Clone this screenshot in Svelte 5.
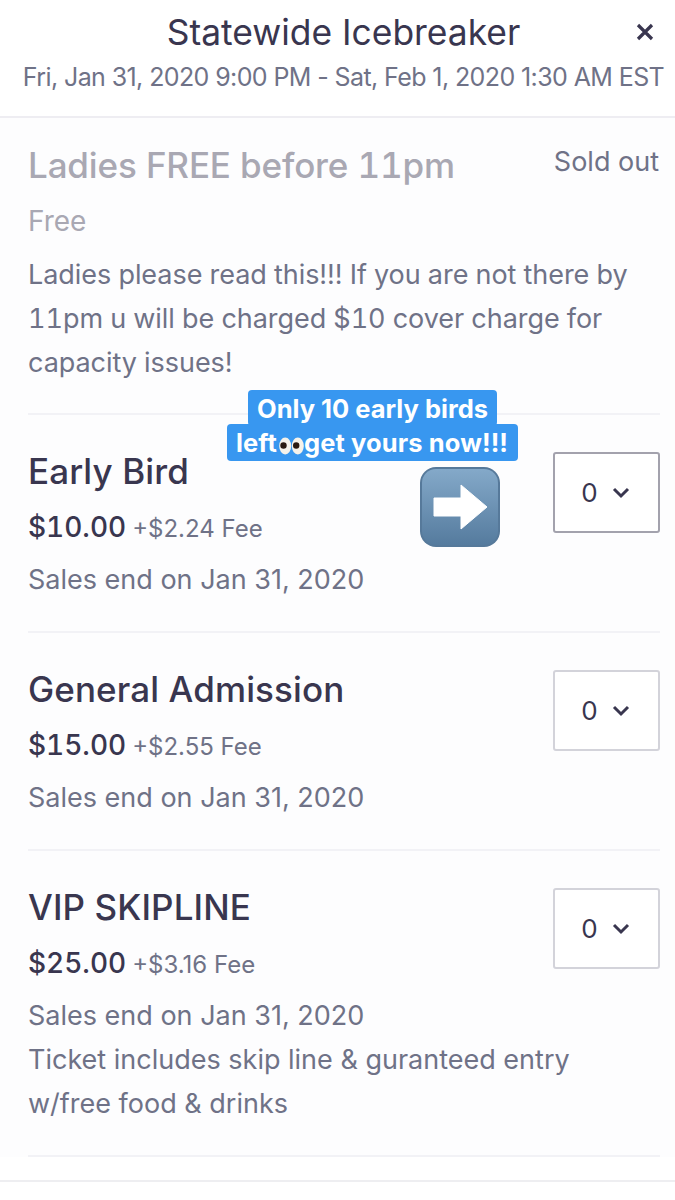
<script>
  const tickets = [
    { name: 'Early Bird', price: '$10.00', fee: '+$2.24 Fee', lines: ['Sales end on Jan 31, 2020'] },
    { name: 'General Admission', price: '$15.00', fee: '+$2.55 Fee', lines: ['Sales end on Jan 31, 2020'] },
    {
      name: 'VIP SKIPLINE',
      price: '$25.00',
      fee: '+$3.16 Fee',
      lines: ['Sales end on Jan 31, 2020', 'Ticket includes skip line & guranteed entry', 'w/free food & drinks']
    }
  ];
</script>

<div class="page">
  <header class="top">
    <h1>Statewide Icebreaker</h1>
    <p class="date">Fri, Jan 31, 2020 9:00 PM - Sat, Feb 1, 2020 1:30 AM EST</p>
    <svg class="close" viewBox="0 0 18 18" width="18" height="18">
      <path d="M2 2 L16 16 M16 2 L2 16" stroke="#39364f" stroke-width="3.2" fill="none" />
    </svg>
  </header>

  <section class="list">
    <div class="ticket sold">
      <div class="info">
        <div class="head">
          <h2>Ladies FREE before 11pm</h2>
          <span class="soldout">Sold out</span>
        </div>
        <div class="free">Free</div>
        <p class="desc">Ladies please read this!!! If you are not there by 11pm u will be charged $10 cover charge for capacity issues!</p>
      </div>
    </div>

    {#each tickets as t}
      <div class="ticket">
        <div class="info">
          <h2>{t.name}</h2>
          <div class="price"><strong>{t.price}</strong><span>{t.fee}</span></div>
          <p class="sales">
            {#each t.lines as line}
              <span>{line}</span>
            {/each}
          </p>
        </div>
        <div class="select">
          <span>0</span>
          <svg viewBox="0 0 18 12" width="18" height="12">
            <path d="M2 2 L9 9 L16 2" stroke="#39364f" stroke-width="3" fill="none" />
          </svg>
        </div>
      </div>
    {/each}
  </section>

  <div class="bottom"></div>

  <div class="sticker">
    <span class="one">Only 10 early birds</span>
    <span class="two">left<svg class="eyes" viewBox="0 0 25 18" width="25" height="18">
        <ellipse cx="6.2" cy="9" rx="6" ry="8.5" fill="#f6f2ea" />
        <ellipse cx="18.8" cy="9" rx="6" ry="8.5" fill="#f6f2ea" />
        <circle cx="4.5" cy="8.5" r="3.2" fill="#2b1a12" />
        <circle cx="17.2" cy="8.5" r="3.2" fill="#2b1a12" />
      </svg>get yours now!!!</span>
  </div>

  <svg class="arrow" viewBox="0 0 82 82" width="82" height="82">
    <defs>
      <linearGradient id="key" x1="0" y1="0" x2="0" y2="1">
        <stop offset="0" stop-color="#84a9c9" />
        <stop offset="1" stop-color="#557b9e" />
      </linearGradient>
    </defs>
    <rect x="1" y="1" width="80" height="80" rx="16" fill="#56799a" />
    <rect x="3" y="3" width="76" height="76" rx="14" fill="url(#key)" />
    <path d="M15 32 H42 V19 L68 41 L42 63 V50 H15 Z" fill="#fff" stroke="#fff" stroke-width="1" stroke-linejoin="round" />
  </svg>
</div>

<style>
  :global(body) {
    margin: 0;
    background: #fff;
  }

  .page {
    position: relative;
    width: 675px;
    height: 1200px;
    overflow: hidden;
    background: #fff;
    font-family: Inter, 'Noto Sans', sans-serif;
    color: #39364f;
  }

  .top {
    position: relative;
    height: 118px;
    box-sizing: border-box;
    padding: 13px 0 0 12px;
    text-align: center;
    border-bottom: 2px solid #eeedf2;
  }

  h1 {
    margin: 0;
    font-size: 35.4px;
    line-height: 40px;
    font-weight: 400;
  }

  .date {
    margin: 5px 0 0;
    font-size: 25px;
    line-height: 38px;
    letter-spacing: -0.6px;
    color: #6f7287;
    white-space: nowrap;
  }

  .close {
    position: absolute;
    top: 23px;
    right: 21px;
  }

  .list {
    padding: 0 15px 0 28px;
    background: #fdfdfe;
  }

  .ticket {
    display: flex;
    justify-content: space-between;
    align-items: flex-start;
    padding: 34px 0 29px;
    border-bottom: 2px solid #f2f2f6;
  }

  .ticket.sold {
    padding: 25px 0 28px;
  }

  .info {
    flex: 1;
    min-width: 0;
  }

  .head {
    display: flex;
    justify-content: space-between;
    align-items: flex-start;
  }

  h2 {
    margin: 0;
    font-size: 35px;
    line-height: 44px;
    font-weight: 500;
    letter-spacing: 0.1px;
    font-variant-numeric: tabular-nums;
  }

  .sold h2 {
    letter-spacing: -0.15px;
    color: #a9a8b3;
  }

  .free {
    margin-top: 12px;
    font-size: 28px;
    line-height: 44px;
    color: #a9a8b3;
  }

  .desc {
    margin: 10px 0 0;
    font-size: 27px;
    line-height: 44px;
    letter-spacing: -0.05px;
    font-variant-numeric: tabular-nums;
    color: #6f7287;
  }

  .soldout {
    margin: -3px 1px 0 0;
    font-size: 27px;
    line-height: 44px;
    color: #6f7287;
  }

  .price {
    display: flex;
    align-items: baseline;
    gap: 6px;
    margin-top: 12px;
    font-size: 28px;
    line-height: 44px;
    white-space: nowrap;
  }

  .price strong {
    font-weight: 500;
    font-variant-numeric: tabular-nums;
  }

  .price span {
    font-size: 24px;
    line-height: 30px;
    color: #6f7287;
  }

  .sales {
    margin: 9px 0 0;
    font-size: 27px;
    line-height: 44px;
    color: #6f7287;
  }

  .sales span {
    display: block;
    white-space: nowrap;
  }

  .select {
    flex: none;
    display: flex;
    align-items: center;
    justify-content: center;
    gap: 14px;
    width: 107px;
    height: 81px;
    box-sizing: border-box;
    margin: 3px 0 0;
    padding-right: 2px;
    border: 2px solid #d3d3da;
    border-radius: 3px;
    font-size: 26px;
    background: #fff;
  }

  .ticket:nth-child(2) .select {
    border-color: #a3a2ad;
  }

  .bottom {
    margin-top: 23px;
    border-top: 2px solid #eeeef1;
  }

  .sticker {
    position: absolute;
    left: 227px;
    top: 390px;
    display: flex;
    flex-direction: column;
    align-items: center;
    font-weight: 700;
    font-size: 25.5px;
    color: #fff;
  }

  .sticker span {
    display: block;
    background: #3897f0;
    border-radius: 4px;
    white-space: nowrap;
  }

  .one {
    padding: 2px 9px 0;
    line-height: 34px;
    margin-bottom: -2px;
  }

  .two {
    padding: 0 10px 0 9px;
    line-height: 37px;
    letter-spacing: 0.1px;
  }

  .eyes {
    margin-left: 2px;
    vertical-align: -3px;
  }

  .arrow {
    position: absolute;
    left: 419px;
    top: 466px;
  }
</style>
